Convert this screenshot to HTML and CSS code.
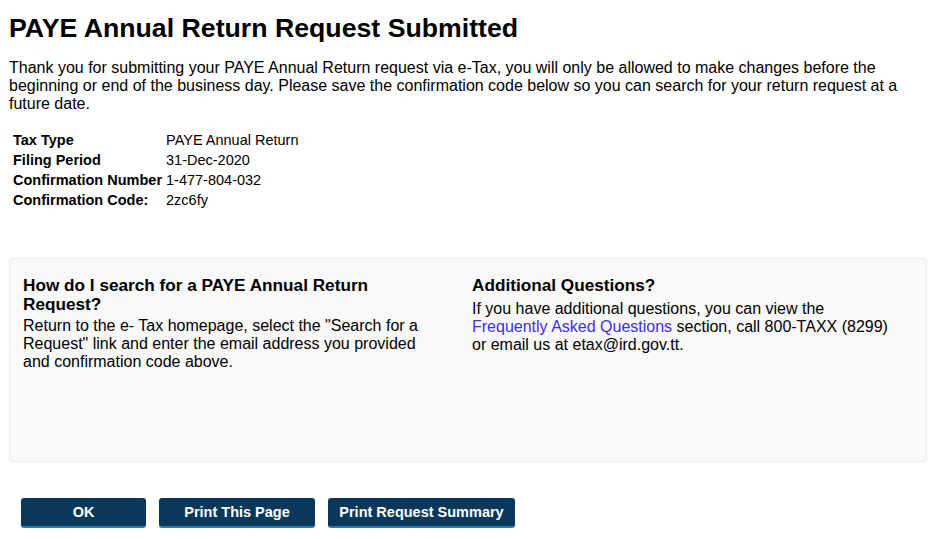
FILE: index.html
```html
<!DOCTYPE html>
<html lang="en">
<head>
    <meta charset="UTF-8">
    <meta name="viewport" content="width=device-width, initial-scale=1.0">
    <title>Request Submitted</title>
    <link rel="stylesheet" href="styles.css">
</head>
<body>
    <div class="page">
        <h1>PAYE Annual Return Request Submitted</h1>
        <p class="intro">Thank you for submitting your PAYE Annual Return request via e-Tax, you will only be allowed to make changes before the beginning or end of the business day. Please save the confirmation code below so you can search for your return request at a future date.</p>

        <table class="summary">
            <tr><th>Tax Type</th><td>PAYE Annual Return</td></tr>
            <tr><th>Filing Period</th><td>31-Dec-2020</td></tr>
            <tr><th>Confirmation Number</th><td>1-477-804-032</td></tr>
            <tr><th>Confirmation Code:</th><td>2zc6fy</td></tr>
        </table>

        <div class="help-box">
            <div class="help-col">
                <h3>How do I search for a PAYE Annual Return Request?</h3>
                <p>Return to the e- Tax homepage, select the "Search for a Request" link and enter the email address you provided and confirmation code above.</p>
            </div>
            <div class="help-col">
                <h3 class="short">Additional Questions?</h3>
                <p>If you have additional questions, you can view the <a href="#">Frequently Asked Questions</a> section, call 800-TAXX (8299) or email us at etax@ird.gov.tt.</p>
            </div>
        </div>

        <div class="actions">
            <button class="btn btn-ok">OK</button>
            <button class="btn btn-print">Print This Page</button>
            <button class="btn btn-summary">Print Request Summary</button>
        </div>
    </div>
</body>
</html>
```

FILE: styles.css
```css
body {
    margin: 0;
    font-family: Arial, "Liberation Sans", sans-serif;
    color: #000;
    background: #fff;
}
.page {
    padding: 0 1px 0 9px;
}
h1 {
    font-size: 26.7px;
    margin: 13px 0 0;
}
.intro {
    font-size: 16px;
    margin: 15px 0 0;
    padding-right: 20px;
}
.summary {
    font-size: 14.5px;
    margin: 16px 0 0 1px;
}
.summary th {
    text-align: left;
    font-weight: bold;
    padding: 1px 1px;
}
.summary td {
    padding: 1px 1px;
}

/* ヘルプの箱 */
.help-box {
    margin-top: 47px;
    height: 172px;
    background-color: #f9f9f9;
    border: 1px solid #ececec;
    border-radius: 4px;
    padding: 17px 0 13px 13px;
    display: grid;
    grid-template-columns: 420px 420px;
    column-gap: 29px;
    align-items: start;
}
.help-col h3 {
    font-size: 17.2px;
    line-height: 19px;
    margin: 0 0 3px;
}
.help-col h3.short {
    margin-bottom: 5px;
}
.help-col p {
    font-size: 16px;
    margin: 0;
}
.help-col a {
    color: #3b2ef5;
    text-decoration: none;
}

.actions {
    display: flex;
    gap: 13px;
    margin: 36px 0 0 12px;
}
.btn {
    height: 30px;
    background-color: #0b385a;
    border: none;
    border-bottom: 2px solid #2f79ad;
    border-radius: 3px;
    color: #fff;
    font-family: Arial, "Liberation Sans", sans-serif;
    font-size: 14.5px;
    font-weight: bold;
    padding: 0;
}
.btn-ok {
    width: 125px;
}
.btn-print {
    width: 156px;
}
.btn-summary {
    width: 187px;
}
```
